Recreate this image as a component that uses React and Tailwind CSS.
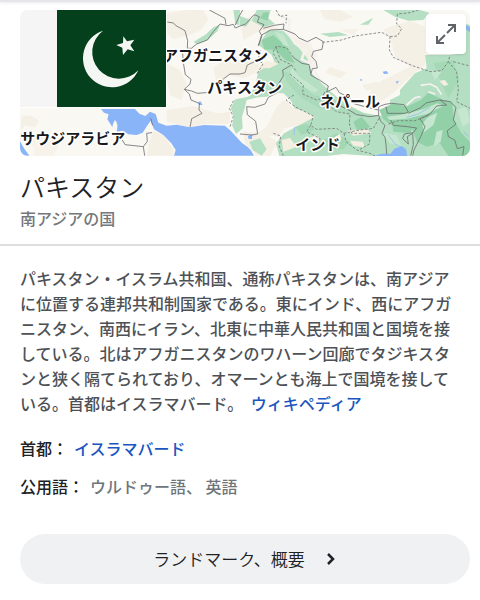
import React from 'react';

const description =
  'パキスタン・イスラム共和国、通称パキスタンは、南アジアに位置する連邦共和制国家である。東にインド、西にアフガニスタン、南西にイラン、北東に中華人民共和国と国境を接している。北はアフガニスタンのワハーン回廊でタジキスタンと狭く隔てられており、オマーンとも海上で国境を接している。首都はイスラマバード。';

const mapLabels = [
  { name: 'アフガニスタン', x: 489, y: 182 },
  { name: 'パキスタン', x: 622, y: 279 },
  { name: 'ネパール', x: 960, y: 322 },
  { name: 'インド', x: 886, y: 449 },
  { name: 'サウジアラビア', x: 61, y: 432 },
];

function RegionMap() {
  return (
    <svg
      viewBox="60 30 1350 438"
      preserveAspectRatio="xMidYMid slice"
      className="block h-[146px] w-full"
      role="img"
      aria-label="パキスタン"
    >
      <rect x="60" y="30" width="1350" height="438" fill="#faf8f3" />

      {/* Dry land */}
      <g fill="#f5f0e5">
        <path d="M500 40 L560 30 610 30 625 60 600 92 560 108 520 118 500 98Z" />
        <path d="M500 190 L540 210 560 250 545 300 510 285 500 240Z" />
        <path d="M500 330 L580 318 650 340 690 335 690 372 610 372 570 380 500 366Z" />
        <path d="M64 350 L90 345 118 362 104 382 76 376 62 390Z" />
        <path d="M92 400 L150 408 180 430 160 467 104 467Z" opacity=".7" />
        <path d="M460 392 L492 408 522 450 518 467 440 467 448 425Z" />
        <path d="M640 205 L668 180 700 190 735 170 780 185 775 215 730 235 690 225 650 250Z" />
        <path d="M720 60 L755 48 800 75 830 82 880 112 930 125 950 165 940 215 905 195 870 165 835 120 780 92 730 120Z" />
        <path d="M958 30 L1020 30 1060 50 1020 65 975 58Z" />
        <path d="M1150 90 L1170 80 1230 62 1275 80 1275 195 1225 235 1180 280 1140 305 1100 290 1130 250 1230 200 1185 170 1170 110Z" />
        <path d="M990 200 L1040 218 1020 235 975 218Z M1085 255 L1130 245 1150 262 1100 272Z M1020 90 L1075 86 1060 105Z" />
        <path d="M830 320 L850 300 865 310 875 320 945 350 900 374 852 386 835 410 770 402 800 380Z" />
        <path d="M730 395 L790 400 835 425 810 467 770 467 735 432Z" />
      </g>

      {/* Vegetation */}
      <g fill="#b5dfc2">
        <path d="M770 30 L812 30 805 55 825 72 790 82 755 62Z" />
        <path d="M720 48 L752 60 738 80 720 76Z" />
        <path d="M580 126 L618 103 640 82 660 74 652 94 622 121 592 132Z" />
        <path d="M700 30 L720 30 718 75 706 72Z" />
        <path d="M1150 30 L1260 30 1288 38 1270 60 1225 62 1185 50Z" />
        <path d="M775 135 L805 90 850 92 885 130 922 175 935 220 970 255 1010 290 1045 315 1090 338 1142 348 1170 315 1170 300 1200 285 1200 270 1245 220 1280 205 1275 165 1350 165 1410 155 1410 468 1115 468 1030 462 980 468 838 468 828 430 852 400 880 385 945 350 912 334 884 325 872 300 850 280 822 278 800 290 775 292 740 300 734 325 726 350 728 385 708 402 696 376 702 350 692 325 706 298 745 290 764 262 775 215 800 198 825 190 815 165Z" />
        <path d="M748 425 L780 415 800 448 785 467 758 450Z" />
        <path d="M960 101 L1015 96 1045 106 990 111Z M1080 74 L1120 53 1105 74Z" />
        <path d="M1350 60 L1410 75 1410 170 1380 165Z" />
      </g>
      <g fill="#92d1a7">
        <path d="M785 120 L820 105 860 140 885 190 860 182 825 150 792 148Z" />
        <path d="M850 215 L885 222 900 250 940 285 990 296 1045 320 1100 344 1070 348 1010 332 955 325 900 290 862 248Z" opacity=".3" />
        <path d="M1138 330 L1180 310 1220 320 1262 300 1285 278 1330 300 1356 305 1362 360 1385 400 1410 425 1410 468 1345 468 1320 430 1280 440 1250 425 1235 380 1175 376 1150 358Z" />
        <path d="M1060 365 L1085 350 1110 380 1075 400Z M1175 365 L1245 372 1230 400 1180 395Z" />
        <path d="M885 380 L920 372 945 388 905 405Z M970 420 L1010 400 1050 425 1030 448 985 445Z" opacity=".5" />
        <path d="M1300 188 L1360 180 1378 240 1345 295 1320 240Z" opacity=".4" />
        <path d="M790 38 L807 36 803 62 780 55Z" />
      </g>
      <g fill="#c6e7cf">
        <path d="M875 205 L900 232 955 270 945 278 900 255 870 225Z" />
        <path d="M1160 350 L1200 345 1270 328 1312 310 1330 318 1280 342 1220 356 1170 360Z" />
        <path d="M1285 350 L1312 338 1300 375 1270 398 1268 370Z M1150 400 L1190 405 1205 440 1170 430Z" />
        <path d="M1372 330 L1398 318 1410 365 1388 380Z M1290 210 L1325 215 1305 240Z" />
        <path d="M825 95 L850 104 868 140 850 135Z M1310 395 L1328 390 1322 425 1300 440Z" />
      </g>
      <g fill="#f4efe1">
        <path d="M775 205 L800 182 825 186 835 192 808 205Z" />
        <path d="M1042 392 L1100 388 1115 400 1060 407Z M1005 410 L1020 402 1024 418 1008 424Z M1050 422 L1088 425 1095 442 1060 437Z" />
        <path d="M845 420 L870 414 890 440 850 455Z M925 415 L950 405 960 420 935 427Z" />
        <path d="M1318 242 L1335 240 1345 254 1332 258Z" />
      </g>

      {/* Snow along the ranges */}
      <g fill="none" stroke="#f4f2ef" strokeWidth="8" strokeLinejoin="round">
        <path d="M830 42 L870 62 865 88 890 112 925 130 948 168 935 200 955 232 985 262" />
        <path d="M985 262 L1025 280 1060 310 1110 325" strokeWidth="4" />
        <path d="M862 95 L885 130 915 150 905 178 930 190" />
        <path d="M1220 315 L1245 293 1262 290 M1262 256 L1290 252 1310 262 1325 284 M1285 275 L1305 282" strokeWidth="5" />
      </g>

      {/* Water */}
      <g fill="#8ab4f8">
        <path d="M303 327 L405 327 418 341 436 348 450 335 467 342 475 368 500 377 530 374 570 382 612 375 675 377 692 392 710 412 725 428 742 440 752 450 762 467 522 467 527 450 514 430 490 405 462 388 452 362 441 378 428 398 410 405 385 403 368 392 352 397 335 378 322 358 326 343 312 338Z" />
        <path d="M60 424 L72 445 88 467 60 467Z" />
        <path d="M1122 468 L1145 461 1172 461 1183 446 1205 438 1218 448 1222 468Z" />
        <path d="M594 310 L600 303 608 314 598 316Z M744 408 L758 402 755 418 745 416Z" />
        <path d="M1148 215 L1160 213 1165 221 1152 222Z M1079 237 L1088 239 1083 244Z M1186 245 L1197 242 1192 251Z M1398 75 L1410 82 1410 96 1399 90Z" />
      </g>
      <path d="M1220 352 L1255 342 1290 322 M1165 405 L1185 432 1202 440 M884 380 L882 405 M1392 395 L1405 410" fill="none" stroke="#8ab4f8" strokeWidth="2" />
      <path d="M345 360 Q356 371 350 394 L340 393 Q333 378 345 360Z" fill="#faf8f3" />

      {/* National borders */}
      <g fill="none" stroke="#6f7072" strokeWidth="2.5" strokeLinejoin="round">
        <path d="M502 66 L520 69 528 77 555 92 563 122 562 145 574 145 590 132 622 120 640 95 660 72 684 77 700 73 706 84 720 78 737 72 748 60 762 44 778 50 772 66 792 74 778 94 786 108 775 137" />
        <path d="M628 30 L675 55 678 74 M706 75 L718 48 728 30" />
        <path d="M562 145 L548 160 550 188 556 224 573 238 570 252 553 268 568 282 573 300 598 310 597 330 606 340 575 356 570 382" />
        <path d="M553 268 L575 273 592 280 628 277 640 250 666 240 690 222 720 222 735 218 742 195 775 180 780 150 M775 137 L785 105 812 90 850 88 852 72 822 76 790 85" />
        <path d="M850 88 L885 102 897 114 922 125 948 112 970 125 966 148 940 154 935 170 948 184 952 204 937 206 932 225 958 240 985 258 980 276 1008 262 1018 278 1050 294 1062 311 1095 320 1135 330" />
        <path d="M928 196 L932 220 M880 172 L905 190 928 194 M875 195 L848 210 850 228 830 260 832 278 805 292 795 312 764 322 740 320 742 344 767 364 773 402 755 405 720 402" />
        <path d="M975 276 L968 288 1010 312 1050 332 1070 344 1110 350 1136 346 1136 320 1155 313 1175 310 1212 314 1225 336 1215 340 1162 340 1158 320" />
        <path d="M1136 346 L1142 364 1155 376 1146 400 1155 412 1158 434 1160 462" />
        <path d="M1172 360 L1180 376 1222 380 1250 384 1240 398 1213 402 1208 416 1225 432 1222 410 1238 400 1240 434 1232 467" />
        <path d="M1225 340 L1260 324 1280 308 1320 300 1340 315 1310 318 1290 342 1260 356 1275 380 1262 410 1242 450 1238 467" />
        <path d="M1320 300 L1350 305 1368 322 1360 360 1368 372 1342 392 1345 410 1364 420 1372 446 1392 440 1388 467" />
        <path d="M367 420 L375 434 430 440 434 467 M430 440 L442 424 440 400 456 398 M452 355 L458 376" />
      </g>

      {/* Regional and disputed borders */}
      <g fill="none" stroke="#77797b" strokeWidth="2.5" strokeDasharray="8 5">
        <path d="M967 127 L1020 121 1065 108 1100 103 1145 97 1170 110 1168 150 1180 172 1235 196 1290 215 1325 212 1345 185 1350 165" />
        <path d="M1170 110 L1192 108 1205 86 1190 72 1192 42 1230 38 1255 30" />
        <path d="M1345 185 L1370 215 1375 270 1370 305 1410 325 M1360 185 L1410 198" />
        <path d="M828 140 L840 178 875 195 890 215 M880 172 L862 145 830 138 818 158 838 190" />
        <path d="M870 222 L910 255 908 282 950 300 970 294 1008 335 1050 342 1048 370" />
        <path d="M882 285 L858 300 885 320 940 348 932 376 950 388 1010 385 1032 400 1080 390 1120 385 1140 350" />
        <path d="M820 400 L842 408 838 440 850 467 M932 376 L920 395 960 415 955 440" />
        <path d="M1032 400 L1038 425 1070 450 1110 460 1125 468 M1048 370 L1055 400 1110 400 1108 432 1080 448" />
        <path d="M690 380 L700 350 688 325 702 300 M768 180 L790 190 772 220 M1165 372 L1195 362 1245 362 1290 345" />
        <path d="M828 30 L840 50 860 45 858 70" />
      </g>

      {/* Labels */}
      <g
        fontFamily='"Noto Sans CJK JP", sans-serif'
        fontSize="45"
        fontWeight="700"
        fill="#18191c"
        stroke="#ffffff"
        strokeWidth="9"
        strokeLinejoin="round"
        paintOrder="stroke"
      >
        {mapLabels.map(label => (
          <text key={label.name} x={label.x} y={label.y}>{label.name}</text>
        ))}
      </g>

      {/* Flag */}
      <rect x="60" y="30" width="441" height="294" fill="#ffffff" />
      <rect x="60" y="30" width="111" height="291" fill="#f5f5f6" />
      <rect x="171" y="30" width="327" height="291" fill="#04401c" />
      <path d="M309 92 A87 87 0 1 0 415 211 A80 80 0 1 1 309 92Z" fill="#f4f6f4" />
      <path d="M370 109 L381 124 403 119 391 136 403 154 383 148 369 165 367 143 349 135 369 129Z" fill="#f4f6f4" />
    </svg>
  );
}

function ExpandIcon() {
  return (
    <svg viewBox="0 0 24 24" className="size-6" fill="none" stroke="#5f6368" strokeWidth="2" aria-hidden="true">
      <path d="M14 3h7v7M21 3l-8 8M3 14v7h7M3 21l8-8" />
    </svg>
  );
}

export default function App() {
  return (
    <main className="min-h-screen bg-white font-['Noto_Sans_CJK_JP',sans-serif] text-base text-[#202124]">
      <div className="h-0.5 bg-[#e6e6ea] shadow-sm" />

      <header className="border-b-2 border-[#dddee0] pt-2 pr-2.5 pb-3.5 pl-5">
        <div className="relative overflow-hidden rounded-lg">
          <RegionMap />
          <button
            type="button"
            aria-label="地図を拡大"
            className="absolute top-1 right-1 flex size-10 items-center justify-center rounded-sm bg-white shadow"
          >
            <ExpandIcon />
          </button>
        </div>
        <h1 className="mt-3.5 text-[25px] leading-8 font-[350]">パキスタン</h1>
        <p className="mt-1 leading-6 font-medium text-[#74777c]">南アジアの国</p>
      </header>

      <section className="pt-5 pr-2.5 pl-5">
        <p className="pr-4 leading-[25px] font-medium text-[#4d5156]">
          <span>{description}</span>{' '}
          <a href="#wikipedia" className="ml-1 text-[#1a55c0]">ウィキペディア</a>
        </p>

        <dl className="mt-5 flex flex-col gap-3.5 leading-6 font-medium">
          <div className="flex gap-1.5">
            <dt>首都：</dt>
            <dd>
              <a href="#islamabad" className="text-[#1a55c0]">イスラマバード</a>
            </dd>
          </div>
          <div className="flex gap-1.5">
            <dt>公用語：</dt>
            <dd className="text-[#70757a]">ウルドゥー語、 英語</dd>
          </div>
        </dl>

        <button
          type="button"
          className="mt-9 flex h-[50px] w-full items-center justify-center gap-5 rounded-full bg-[#f0f1f3] text-[17px] font-[350]"
        >
          ランドマーク、概要
          <svg viewBox="0 0 12 16" className="h-4 w-3" fill="none" stroke="currentColor" strokeWidth="2.5" aria-hidden="true">
            <path d="M3 3l5 5-5 5" />
          </svg>
        </button>
      </section>
    </main>
  );
}
